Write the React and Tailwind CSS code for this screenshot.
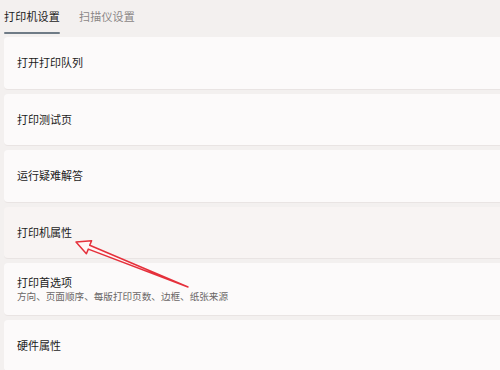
import React from 'react'

const items = [
  { title: '打开打印队列' },
  { title: '打印测试页' },
  { title: '运行疑难解答' },
  { title: '打印机属性', active: true },
  { title: '打印首选项', sub: '方向、页面顺序、每版打印页数、边框、纸张来源' },
  { title: '硬件属性' },
]

const App = () => {
  return (
    <div
      className="relative w-[500px] h-[370px] overflow-hidden bg-[#f3f0ef] text-[#1b1b1b]"
      style={{ fontFamily: '"Noto Sans CJK SC", "Noto Sans", sans-serif' }}
    >
      <div className="flex pl-[4px] pt-[6px] gap-[19px] text-[11px]">
        <div className="flex flex-col items-start">
          <span className="leading-[20px] tracking-[0.2px]">打印机设置</span>
          <div className="mt-[6px] h-[2px] w-[56px] rounded-full bg-[#6f7b86]" />
        </div>
        <span className="leading-[20px] tracking-[0.2px] text-[#8a8686]">扫描仪设置</span>
      </div>

      <div className="mt-[3px] flex flex-col gap-[4px] pl-[4px]">
        {items.map((it, i) => (
          <div
            key={i}
            className={
              'w-[520px] h-[52.5px] rounded-[4px] border-b border-[#e9e4e3] flex flex-col justify-center pl-[13px] ' +
              (it.active ? 'bg-[#f8f4f3]' : 'bg-[#fcfafa]')
            }
          >
            <span className="text-[11px] leading-[15px]">{it.title}</span>
            {it.sub && (
              <span className="text-[9.6px] leading-[13px] text-[#6a6666]">{it.sub}</span>
            )}
          </div>
        ))}
      </div>

      <svg className="absolute left-0 top-0 pointer-events-none" width="500" height="370">
        <polygon
          points="76,242 91.6,240.7 89.7,245.3 188,287 88.3,249.1 86.4,253.7"
          fill="#fff6f6"
          stroke="#e5303b"
          strokeWidth="1.5"
          strokeLinejoin="round"
        />
      </svg>
    </div>
  )
}

export default App
